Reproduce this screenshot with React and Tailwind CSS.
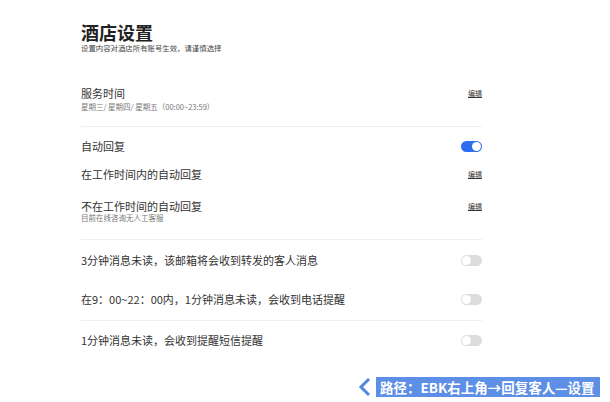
import { Fragment } from "react";

function Toggle({ on }) {
  return (
    <div
      className={`w-[21px] h-[11px] rounded-full flex items-center px-[1px] ${
        on ? "bg-[#2f6df0] justify-end" : "bg-[#dcdcdc] justify-start"
      }`}
    >
      <div className="w-[9px] h-[9px] rounded-full bg-white" />
    </div>
  );
}

function EditLink() {
  return (
    <span className="text-[7px] leading-[10px] text-[#333] underline underline-offset-1">
      编辑
    </span>
  );
}

export default function App() {
  return (
    <div
      className="w-[610px] h-[402px] bg-white flex flex-col text-[#333]"
      style={{ fontFamily: '"Noto Sans CJK SC", "Noto Sans", sans-serif' }}
    >
      <div className="pl-[81px] w-[482px] flex flex-col">
        {/* 标题 */}
        <h1 className="mt-[21px] text-[18px] leading-[22px] font-bold text-[#222]">
          酒店设置
        </h1>
        <p className="mt-[1px] text-[7.4px] leading-[8px] text-[#444]">
          设置内容对酒店所有账号生效，请谨慎选择
        </p>

        {/* 服务时间 */}
        <div className="mt-[34px] flex justify-between items-center">
          <span className="text-[11px] leading-[14px]">服务时间</span>
          <EditLink />
        </div>
        <p className="mt-[3px] text-[7.5px] leading-[8px] text-[#777]">
          星期三/ 星期四/ 星期五（00:00~23:59）
        </p>
        <div className="mt-[15px] border-t border-[#f0f0f0]" />

        {/* 自动回复 */}
        <div className="mt-[12px] flex justify-between items-center">
          <span className="text-[11px] leading-[14px]">自动回复</span>
          <Toggle on />
        </div>
        <div className="mt-[14px] flex justify-between items-center">
          <span className="text-[11px] leading-[14px]">在工作时间内的自动回复</span>
          <EditLink />
        </div>
        <div className="mt-[18px] flex justify-between items-center">
          <span className="text-[11px] leading-[14px]">不在工作时间的自动回复</span>
          <EditLink />
        </div>
        <p className="mt-[1px] text-[7.5px] leading-[8px] text-[#777]">目前在线咨询无人工客服</p>
        <div className="mt-[17px] border-t border-[#f0f0f0]" />

        {/* 提醒 */}
        <div className="mt-[13px] flex justify-between items-center">
          <span className="text-[11px] leading-[14px]">
            3分钟消息未读，该邮箱将会收到转发的客人消息
          </span>
          <Toggle />
        </div>
        <div className="mt-[25px] flex justify-between items-center">
          <span className="text-[11px] leading-[14px]">
            在9：00~22：00内，1分钟消息未读，会收到电话提醒
          </span>
          <Toggle />
        </div>
        <div className="mt-[14px] border-t border-[#f0f0f0]" />
        <div className="mt-[12px] flex justify-between items-center">
          <span className="text-[11px] leading-[14px]">1分钟消息未读，会收到提醒短信提醒</span>
          <Toggle />
        </div>
      </div>

      {/* 路径提示 */}
      <div className="mt-[30px] flex justify-end items-center pr-[10px]">
        <svg width="14" height="20" viewBox="0 0 14 20" className="mr-[4px]">
          <path d="M11 2 L3 10 L11 18" fill="none" stroke="#4f86de" strokeWidth="3" />
        </svg>
        <div className="w-[224px] h-[20px] bg-[#5d8fe6] flex items-center pl-[4px]">
          <span className="text-white font-bold text-[13.5px] leading-[20px] whitespace-nowrap">
            路径：EBK右上角→回复客人—设置
          </span>
        </div>
      </div>
    </div>
  );
}
